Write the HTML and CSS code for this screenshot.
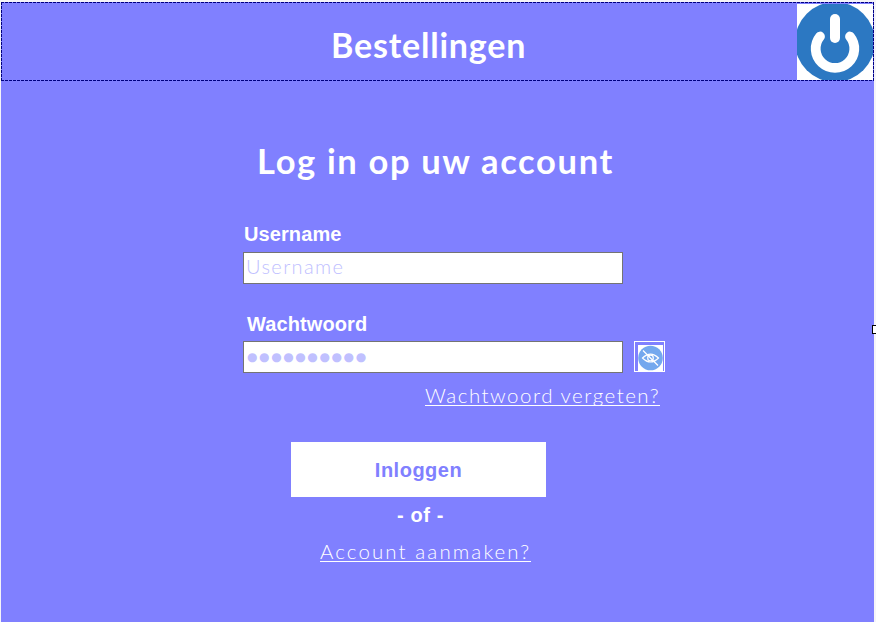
FILE: index.html
```html
<!DOCTYPE html>
<html lang="nl">
<head>
<meta charset="utf-8">
<title>Bestellingen</title>
<link rel="stylesheet" href="styles.css">
</head>
<body>
<main class="window">
  <header class="header">
    <h1 class="title">Bestellingen</h1>
    <button class="power" aria-label="Afsluiten">
      <svg viewBox="0 0 76 76" width="76" height="76">
        <rect width="76" height="76" fill="#fff"/>
        <circle cx="38" cy="38" r="40" fill="#2c78c2"/>
        <path d="M23 32.5A19.3 19.3 0 1 0 53 32.5" fill="none" stroke="#fff" stroke-width="9.8" stroke-linecap="round"/>
        <path d="M38 15V34" stroke="#fff" stroke-width="10" stroke-linecap="round"/>
      </svg>
    </button>
  </header>
  <form class="login">
    <h2 class="heading"><span>Log in op uw account</span></h2>
    <label class="label user"><span>Username</span></label>
    <div class="field"><span class="placeholder">Username</span></div>
    <label class="label pass"><span>Wachtwoord</span></label>
    <div class="row">
      <div class="field"><span class="dots">●●●●●●●●●●</span></div>
      <button type="button" class="eye" aria-label="Wachtwoord tonen">
        <svg viewBox="0 0 25 26" width="25" height="26">
          <rect width="25" height="26" fill="#fff"/>
          <circle cx="12.5" cy="13" r="12.3" fill="#74a8ee"/>
          <g fill="none" stroke="#fff" stroke-width="1.2">
            <path d="M4.5 13Q12.5 5 20.5 13Q12.5 21 4.5 13Z"/>
            <circle cx="12.5" cy="13" r="2.8"/>
            <path d="M5 5.5L20 20.5"/>
          </g>
        </svg>
      </button>
    </div>
    <a class="link forgot"><span>Wachtwoord vergeten?</span></a>
    <button type="button" class="submit"><span>Inloggen</span></button>
    <p class="or"><span>- of -</span></p>
    <a class="link create"><span>Account aanmaken?</span></a>
  </form>
</main>
<i class="handle"></i>
</body>
</html>
```
FILE: styles.css
```css
* { box-sizing: border-box; }
body { margin: 0; background: #f5f4f8; overflow: hidden; font-family: "Century Gothic", Lato, "Liberation Sans", sans-serif; color: #fff; }
button { margin: 0; padding: 0; border: 0; font: inherit; display: block; }
svg { display: block; }
span { white-space: nowrap; }
.window { margin: 2px 2px 0 1px; height: 620px; background: #8080ff; }
.header {
  --dash: #000080 0 3px, transparent 3px 4px;
  height: 79px; display: flex; justify-content: space-between; padding: 2px 1px 0 330px;
  background:
    repeating-linear-gradient(90deg, var(--dash)) top / 100% 1px no-repeat,
    repeating-linear-gradient(90deg, var(--dash)) bottom / 100% 1px no-repeat,
    repeating-linear-gradient(180deg, var(--dash)) left / 1px 100% no-repeat,
    repeating-linear-gradient(180deg, var(--dash)) right / 1px 100% no-repeat;
}
.title { margin: 0; font-size: 34px; line-height: 40px; padding-top: 21px; letter-spacing: .8px; }
.power { width: 76px; height: 76px; }
.login { display: flex; flex-direction: column; align-items: flex-start; padding-left: 242px; }
.heading { margin: 60px 0 0 14px; font-size: 34.5px; line-height: 40px; letter-spacing: 1.65px; }
.label { font: bold 20px/24px "Liberation Sans", sans-serif; letter-spacing: .1px; }
.user { margin: 41px 0 0 1px; }
.pass { margin: 28px 0 0 4px; }
.field { width: 380px; height: 32px; background: #fff; border: 1px solid #747474; padding-left: 2px; line-height: 27px; color: #c0c0ff; }
.user + .field { margin-top: 6px; }
.placeholder { font-size: 20px; font-weight: 300; display: block; letter-spacing: 1.4px; }
.row { display: flex; gap: 11px; margin-top: 5px; }
.dots { font: 12px/30px "DejaVu Sans", sans-serif; display: block; padding-left: 1px; letter-spacing: 1.6px; }
.eye { width: 31px; height: 31px; border: 1px solid #fff; background: #8080ff; padding: 3px 0 0 3px; }
.link { font-size: 20.5px; font-weight: 300; line-height: 23px; }
.link span { display: block; border-bottom: 1px solid #fff; height: 22px; }
.forgot { margin: 11px 0 0 182px; letter-spacing: 1.5px; }
.forgot span { width: 235px; }
.submit { width: 255px; height: 55px; margin: 36px 0 0 48px; background: #fff; color: #8080ff; font: bold 20px/24px "Liberation Sans", sans-serif; letter-spacing: .5px; }
.or { margin: 6px 0 0 154px; font: bold 20px/24px "Liberation Sans", sans-serif; letter-spacing: .6px; }
.create { margin: 13px 0 0 77px; letter-spacing: 2.1px; }
.create span { width: 211px; }
.handle { position: absolute; left: 872px; top: 325px; width: 8px; height: 9px; border: 1px solid #000; background: #fff; }
```
